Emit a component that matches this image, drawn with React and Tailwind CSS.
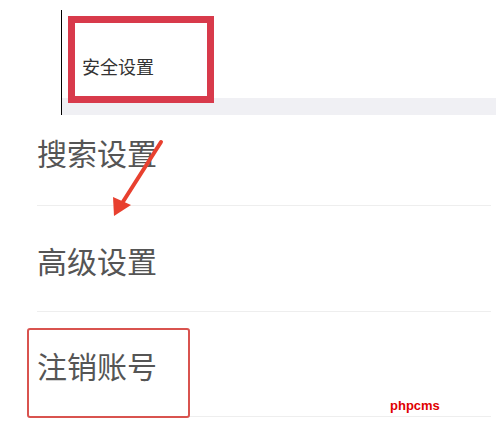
import React from 'react';

const FONT = { fontFamily: '"Noto Sans CJK SC", "Noto Sans", sans-serif' };

const Row = ({ label, className = '' }) => (
  <div className={`mx-[37px] mr-[5px] border-b border-[#eeeeee] flex ${className}`}>
    <span className="text-[30px] leading-[30px] text-[#555555]">{label}</span>
  </div>
);

export default function App() {
  return (
    <div className="relative w-[496px] h-[425px] overflow-hidden bg-white" style={FONT}>
      {/* Top: selected item */}
      <div className="pt-[10px] pl-[61px]">
        <div className="border-l border-black h-[105px] flex flex-col">
          <div className="ml-[6px] mt-[6px] -mb-[5px] relative z-10 w-[146px] h-[87px] border-[7px] border-[#d83a4b] bg-white pl-[7px] pt-[34px]">
            <span className="block text-[18px] leading-[18px] text-[#333333]">安全设置</span>
          </div>
          <div className="flex-1 bg-[#f0f0f4]" />
        </div>
      </div>

      {/* Settings list */}
      <Row label="搜索设置" className="h-[91px] pt-[22px]" />
      <Row label="高级设置" className="h-[106px] items-center pt-[2px]" />
      <Row label="注销账号" className="h-[105px] items-center pt-[2px]" />

      {/* Annotations */}
      <div className="absolute left-[27px] top-[328px] w-[163px] h-[90px] border-2 border-[#d9534f] rounded-[3px]" />
      <svg className="absolute left-0 top-0" width="496" height="425" viewBox="0 0 496 425">
        <line x1="161" y1="142" x2="119" y2="208" stroke="#e8402f" strokeWidth="4" strokeLinecap="round" />
        <polygon points="114,216 113,197 131,205" fill="#e8402f" />
      </svg>
      <span
        className="absolute left-[390px] top-[398px] text-[13px] leading-[15px] font-bold text-[#e00000]"
        style={{ fontFamily: '"Liberation Sans", Arial, sans-serif' }}
      >
        phpcms
      </span>
    </div>
  );
}
